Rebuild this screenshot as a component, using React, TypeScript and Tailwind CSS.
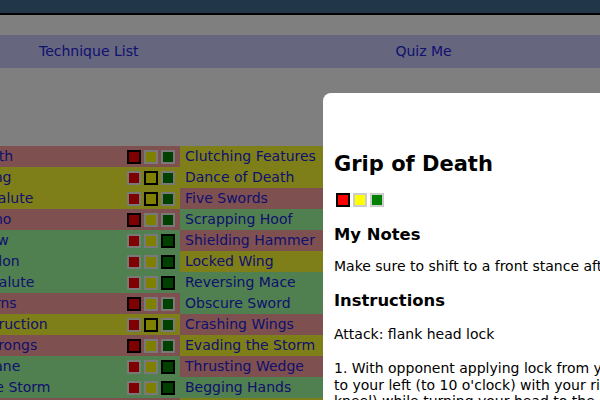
type Level = "r" | "y" | "g";

type Technique = { name: string; level: Level };

const rowBg: Record<Level, string> = {
  r: "bg-[#ffa0a0]",
  y: "bg-[#ffff33]",
  g: "bg-[#a0ffa0]",
};

const columns: Technique[][] = [
  [
    { name: "Grip of Death", level: "r" },
    { name: "Twirling Wing", level: "y" },
    { name: "Triggered Salute", level: "y" },
    { name: "Tight Kimono", level: "r" },
    { name: "Falling Arrow", level: "g" },
    { name: "Crossing Talon", level: "g" },
    { name: "Thrusting Salute", level: "g" },
    { name: "Circling Horns", level: "r" },
    { name: "Gift of Destruction", level: "y" },
    { name: "Thrusting Prongs", level: "r" },
    { name: "Leaping Crane", level: "g" },
    { name: "Calming the Storm", level: "g" },
    { name: "Sword of Destruction", level: "r" },
  ],
  [
    { name: "Clutching Features", level: "y" },
    { name: "Dance of Death", level: "y" },
    { name: "Five Swords", level: "r" },
    { name: "Scrapping Hoof", level: "g" },
    { name: "Shielding Hammer", level: "r" },
    { name: "Locked Wing", level: "y" },
    { name: "Reversing Mace", level: "g" },
    { name: "Obscure Sword", level: "g" },
    { name: "Crashing Wings", level: "r" },
    { name: "Evading the Storm", level: "y" },
    { name: "Thrusting Wedge", level: "r" },
    { name: "Begging Hands", level: "g" },
    { name: "Delayed Sword", level: "y" },
  ],
  [
    { name: "Alternating Maces", level: "g" },
    { name: "Darting Mace", level: "y" },
    { name: "Captured Twigs", level: "r" },
    { name: "Deflecting Hammer", level: "g" },
    { name: "Leap of Death", level: "y" },
    { name: "Entwined Maces", level: "r" },
    { name: "Sword and Hammer", level: "g" },
    { name: "Mace of Aggression", level: "y" },
    { name: "Striking Serpent", level: "g" },
    { name: "Hooking Arrows", level: "r" },
    { name: "Buckling Branch", level: "y" },
    { name: "Parting Wings", level: "g" },
    { name: "Glancing Salute", level: "r" },
  ],
];

function Squares({ level, light }: { level: Level; light?: boolean }) {
  const off = light ? "border-[#cccccc]" : "border-[#f2f2f2]";
  return (
    <div className="flex shrink-0 gap-[3px]">
      <span className={`h-[14px] w-[14px] border-2 bg-[#ff0000] ${level === "r" ? "border-black" : off}`} />
      <span className={`h-[14px] w-[14px] border-2 bg-[#ffff00] ${level === "y" ? "border-black" : off}`} />
      <span className={`h-[14px] w-[14px] border-2 bg-[#008000] ${level === "g" ? "border-black" : off}`} />
    </div>
  );
}

function TechniqueCell({ t }: { t: Technique }) {
  return (
    <div className={`flex h-[21px] items-center pr-[5px] ${rowBg[t.level]}`}>
      <span className="w-[213px] shrink-0 overflow-hidden whitespace-nowrap pl-[5px] leading-[21px] text-[#2222dd]">
        {t.name}
      </span>
      <Squares level={t.level} />
    </div>
  );
}

export default function App() {
  const rows = columns[0].map((_, i) => i);
  return (
    <div className="relative h-[400px] w-[600px] overflow-hidden bg-white font-['DejaVu_Sans',sans-serif] text-[14px]">
      <div className="h-[15px] border-b-2 border-black bg-[#456c94]" />

      <nav className="mt-[20px] flex h-[33px] items-center bg-[#ccccff] text-[#2222dd]">
        <a className="ml-[39px]">Technique List</a>
        <a className="ml-[257px]">Quiz Me</a>
      </nav>

      <div className="ml-[-86px] mt-[78px] grid w-[798px] grid-cols-3">
        {rows.map((i) =>
          columns.map((col, c) => <TechniqueCell key={`${i}-${c}`} t={col[i]} />)
        )}
      </div>

      <div className="absolute inset-0 bg-black/50" />

      <div className="absolute left-[323px] top-[93px] h-[400px] w-[640px] rounded-tl-lg bg-white pl-[11px] pt-[59px] text-black">
        <h2 className="text-[21px] font-bold leading-[24px]">Grip of Death</h2>
        <div className="ml-[2px] mt-[17px]">
          <Squares level="r" light />
        </div>
        <h3 className="mt-[18px] text-[16.4px] font-bold leading-[19px]">My Notes</h3>
        <p className="mt-[14px] whitespace-nowrap leading-[17px]">
          Make sure to shift to a front stance after the lock is released.
        </p>
        <h3 className="mt-[16px] text-[16.4px] font-bold leading-[19px]">Instructions</h3>
        <p className="mt-[16px] leading-[17px]">Attack: flank head lock</p>
        <p className="mt-[17px] whitespace-nowrap leading-[16.6px]">
          1. With opponent applying lock from your right side, step back
          <br />
          to your left (to 10 o'clock) with your right foot (into a left
          <br />
          kneel) while turning your head to the right.
        </p>
      </div>
    </div>
  );
}
